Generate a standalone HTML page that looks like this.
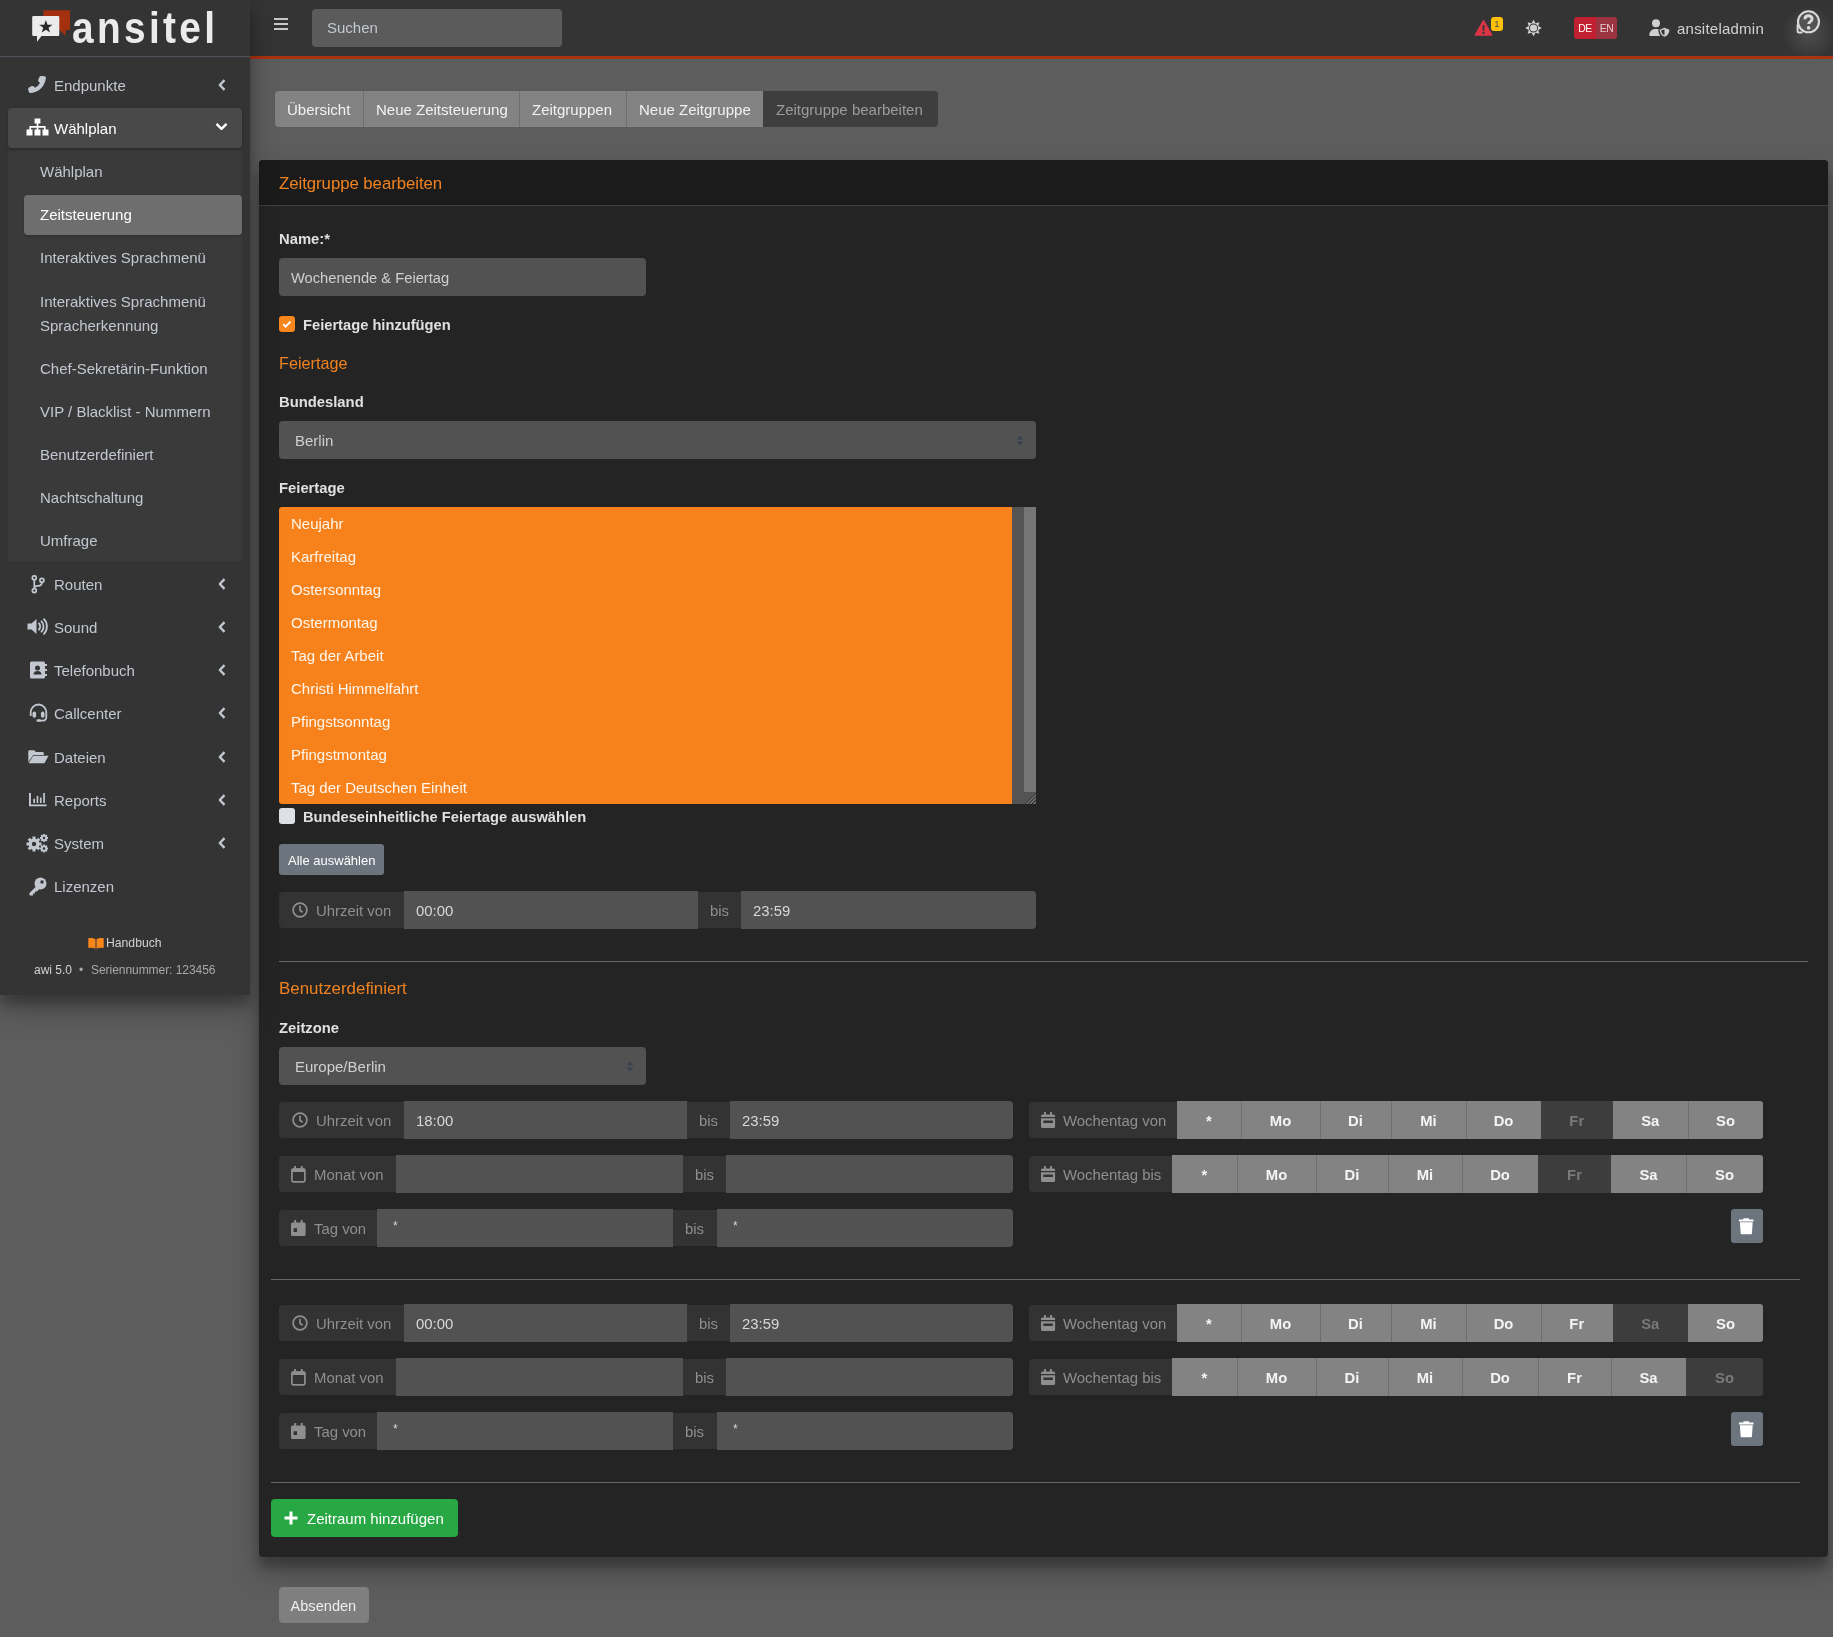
<!DOCTYPE html>
<html><head><meta charset="utf-8">
<style>
*{box-sizing:border-box;margin:0;padding:0}
html,body{width:1833px;height:1637px;overflow:hidden}
body{position:relative;background:#5d5d5d;font-family:"Liberation Sans",sans-serif;font-size:15px;color:#dcdcdc}
.a{position:absolute}
.t{position:absolute;white-space:nowrap;line-height:20px;height:20px}
svg{position:absolute;display:block}
/* navbar */
#nav{left:250px;top:0;width:1583px;height:59px;background:#343434;border-bottom:3px solid #aa330f}
#side{left:0;top:0;width:250px;height:995px;background:#343434;box-shadow:0 14px 28px rgba(0,0,0,.25),0 10px 10px rgba(0,0,0,.22);z-index:5}
.mi{color:#c2c7d0}
.chev{position:absolute;left:218px;width:8px;height:12px}
/* card */
#card{left:259px;top:160px;width:1569px;height:1397px;background:#242424;border-radius:4px;box-shadow:0 14px 28px rgba(0,0,0,.25),0 10px 10px rgba(0,0,0,.22)}
.lbl{font-weight:bold;color:#dedede;font-size:14.7px}
.inp{position:absolute;background:#525252;border-radius:4px}
.pre{position:absolute;background:#333333;border-radius:4px 0 0 4px}
.ptx{color:#8f8f8f;font-size:15px}
.val{color:#d9d9d9;font-size:15px}
</style></head><body><div id="root" style="position:absolute;left:0;top:0;width:1833px;height:1637px;will-change:transform;background:#5d5d5d">

<!-- content shadow below navbar -->


<div id="nav" class="a"></div>
<div class="a" style="left:274px;top:18px;width:14px;height:2px;background:#c8c8c8"></div>
<div class="a" style="left:274px;top:23px;width:14px;height:2px;background:#c8c8c8"></div>
<div class="a" style="left:274px;top:28px;width:14px;height:2px;background:#c8c8c8"></div>
<div class="a" style="left:312px;top:9px;width:250px;height:38px;background:#5b5b5b;border-radius:4px"></div>
<div class="t" style="left:327px;top:18px;color:#c3c7ce">Suchen</div>
<!-- warning -->
<svg style="left:1474px;top:19px" width="19" height="18" viewBox="0 0 19 18"><path d="M9.5 2.0L17.4 15.9H1.6z" fill="#dc3545" stroke="#dc3545" stroke-width="1.8" stroke-linejoin="round"/><path d="M8.4 6.2h2.2l-.35 5.6h-1.5z" fill="#343434"/><circle cx="9.5" cy="14" r="1.15" fill="#343434"/></svg>
<div class="a" style="left:1491px;top:17px;width:12px;height:14px;background:#ffc107;border-radius:3px;font-size:9.5px;line-height:14px;text-align:center;color:#4a4a4a">1</div>
<!-- sun -->
<svg style="left:1525px;top:19px" width="17" height="18" viewBox="0 0 17 18"><path d="M8.50 0.70L10.49 4.20L14.37 3.13L13.30 7.01L16.80 9.00L13.30 10.99L14.37 14.87L10.49 13.80L8.50 17.30L6.51 13.80L2.63 14.87L3.70 10.99L0.20 9.00L3.70 7.01L2.63 3.13L6.51 4.20z" fill="#cfcfcf"/><circle cx="8.5" cy="9" r="4.5" fill="#343434"/><circle cx="8.5" cy="9" r="3.6" fill="#cfcfcf"/></svg>
<!-- DE EN -->
<div class="a" style="left:1574px;top:17px;width:43px;height:22px;border-radius:3px;overflow:hidden;font-size:10.4px;line-height:23px;letter-spacing:-0.4px">
 <div class="a" style="left:0;top:0;width:22px;height:22px;background:#c0202f;color:#fff;text-align:center">DE</div>
 <div class="a" style="left:22px;top:0;width:21px;height:22px;background:#9b3441;color:#e6c9cc;text-align:center">EN</div>
</div>
<!-- user shield -->
<svg style="left:1649px;top:19px" width="21" height="18" viewBox="0 0 21 18"><circle cx="7" cy="4.2" r="4" fill="#cfcfcf"/><path d="M0.3 16.5c0-4 2.5-6.5 6.2-6.5h3c-.3 1.5-.2 4 1.7 7H1.3c-.6 0-1-.2-1-.5z" fill="#cfcfcf"/><path d="M15.5 8.7l4.9 2c0 3.3-1.7 5.9-4.9 7-3.2-1.1-4.9-3.7-4.9-7z" fill="#cfcfcf"/><path d="M15.5 10.2v6.1c-2-.9-3.3-2.7-3.4-4.9z" fill="#343434"/></svg>
<div class="t" style="left:1677px;top:18.5px;color:#d2d2d2;letter-spacing:0.23px">ansiteladmin</div>
<!-- help -->
<div class="a" style="left:1782px;top:6px;width:54px;height:54px;border-radius:50%;background:radial-gradient(circle,rgba(255,255,255,.12) 0%,rgba(255,255,255,.06) 40%,rgba(255,255,255,0) 70%)"></div>
<svg style="left:1795px;top:9px" width="27" height="27" viewBox="0 0 27 27"><path d="M2.6 15.3v6.9c0 .8.5 1.3 1.3 1.3h3.6" stroke="#dadada" stroke-width="1.9" fill="none"/><circle cx="13.5" cy="12.8" r="10.5" fill="#585858" fill-opacity=".8" stroke="#dadada" stroke-width="2.1"/><path d="M9.9 10.2c0-2.2 1.6-3.5 3.6-3.5s3.6 1.3 3.6 3.2c0 2.6-3.4 2.7-3.4 5" stroke="#dadada" stroke-width="2.9" fill="none"/><circle cx="13.6" cy="18.9" r="1.8" fill="#dadada"/></svg>
<!--SIDE-->
<div id="side" class="a">
 <!-- logo -->
 <svg style="left:32px;top:10px" width="40" height="33" viewBox="0 0 40 33">
  <path d="M11.5 0.3h26.5v19.7l-4.5 0.3v5.8l-5.5-5.8h-16.5z" fill="#a3300f"/>
  <path d="M1.5 5.9h24.5a1.3 1.3 0 0 1 1.3 1.3v17.6a1.3 1.3 0 0 1-1.3 1.3h-16.5l-4.5 5.7v-5.7h-3.5a1.3 1.3 0 0 1-1.3-1.3v-17.6a1.3 1.3 0 0 1 1.3-1.3z" fill="#ebebeb"/>
  <path d="M13.90 9.90L15.55 14.63L20.56 14.74L16.56 17.77L18.01 22.56L13.90 19.70L9.79 22.56L11.24 17.77L7.24 14.74L12.25 14.63z" fill="#2a2a2a"/>
 </svg>
 <div class="a" style="left:72px;top:4.9px;font-size:44.6px;line-height:46px;font-weight:bold;color:#ebebeb;letter-spacing:3.85px;transform:scaleX(0.87);transform-origin:0 0">ansitel</div>
 <div class="a" style="left:0;top:56px;width:250px;height:1px;background:#4b545c"></div>

 <!-- Endpunkte -->
 <svg style="left:28px;top:75px" width="19" height="19" viewBox="0 0 19 19"><path d="M16.6 1.2c1 .3 1.5 1.2 1.3 2.2C16.5 11.6 10.9 17 3 18.1c-1 .1-1.900-.4-2.2-1.4l-.6-2.3c-.2-.9.3-1.8 1.1-2.2l2.6-1.1c.8-.3 1.7-.1 2.2.6l.9 1.1c2.1-1.1 3.9-2.9 5-5l-1.1-.9c-.7-.5-.9-1.4-.6-2.2l1.1-2.6c.4-.8 1.3-1.3 2.2-1.100z" fill="#c2c7d0"/></svg>
 <div class="t mi" style="left:54px;top:76px">Endpunkte</div>
 <svg class="chev" style="top:79px" viewBox="0 0 8 12"><path d="M6.5 1.2L1.8 6l4.7 4.8" stroke="#c2c7d0" stroke-width="2.4" fill="none" stroke-linejoin="round"/></svg>

 <!-- Wählplan active -->
 <div class="a" style="left:8px;top:108px;width:234px;height:40px;background:#494949;border-radius:4px;box-shadow:0 1px 3px rgba(0,0,0,.2)"></div>
 <svg style="left:26px;top:118px" width="23" height="18" viewBox="0 0 23 18"><path d="M8.6 0.5h5.8v5h-5.8z M10.7 5.5h1.6v2.6h-1.6z M3.4 8.1h16.2v1.6H3.4z M3.4 8.1h1.6v3.4H3.4z M10.7 8.1h1.6v3.4h-1.6z M18 8.1h1.6v3.4H18z M0.5 11.5h6v6h-6z M8.5 11.5h6v6h-6z M16.5 11.5h6v6h-6z" fill="#fff"/></svg>
 <div class="t" style="left:54px;top:119px;color:#fff">Wählplan</div>
 <svg style="left:215px;top:122px" width="13" height="9" viewBox="0 0 13 9"><path d="M1.5 1.8L6.5 6.8l5-5" stroke="#fff" stroke-width="2.4" fill="none" stroke-linejoin="round"/></svg>

 <!-- submenu -->
 <div class="a" style="left:8px;top:151px;width:234px;height:410px;background:#3a3a3a"></div>
 <div class="a" style="left:24px;top:195px;width:218px;height:40px;background:#6e6e6e;border-radius:4px;box-shadow:0 1px 3px rgba(0,0,0,.2)"></div>
 <div class="t mi" style="left:40px;top:162px">Wählplan</div>
 <div class="t" style="left:40px;top:205px;color:#fff">Zeitsteuerung</div>
 <div class="t mi" style="left:40px;top:248px">Interaktives Sprachmenü</div>
 <div class="t mi" style="left:40px;top:292px">Interaktives Sprachmenü</div>
 <div class="t mi" style="left:40px;top:316px">Spracherkennung</div>
 <div class="t mi" style="left:40px;top:359px">Chef-Sekretärin-Funktion</div>
 <div class="t mi" style="left:40px;top:402px">VIP / Blacklist - Nummern</div>
 <div class="t mi" style="left:40px;top:445px">Benutzerdefiniert</div>
 <div class="t mi" style="left:40px;top:488px">Nachtschaltung</div>
 <div class="t mi" style="left:40px;top:531px">Umfrage</div>

 <!-- Routen -->
 <svg style="left:30.5px;top:574.5px" width="15" height="19" viewBox="0 0 15 19"><g fill="none" stroke="#c2c7d0" stroke-width="1.7"><circle cx="3.3" cy="2.8" r="2"/><circle cx="3.3" cy="15.6" r="2"/><circle cx="10.9" cy="5.3" r="2"/><path d="M3.3 4.8v8.8M10.9 7.3c0 2.6-1.6 3.6-3.6 3.6H6.5c-2 0-3.2.9-3.2 2.6"/></g></svg>
 <div class="t mi" style="left:54px;top:575px">Routen</div>
 <svg class="chev" style="top:578px" viewBox="0 0 8 12"><path d="M6.5 1.2L1.8 6l4.7 4.8" stroke="#c2c7d0" stroke-width="2.4" fill="none" stroke-linejoin="round"/></svg>

 <!-- Sound -->
 <svg style="left:27px;top:618px" width="21" height="17" viewBox="0 0 21 17"><path d="M0.5 5.5h4l5-4.5v15l-5-4.5h-4z" fill="#c2c7d0"/><path d="M12 5.5c1.5 1.5 1.5 4.5 0 6M14.5 3.3c2.7 2.7 2.7 7.7 0 10.4M17 1.2c3.8 3.8 3.8 10.8 0 14.6" stroke="#c2c7d0" stroke-width="1.8" fill="none" stroke-linecap="round"/></svg>
 <div class="t mi" style="left:54px;top:618px">Sound</div>
 <svg class="chev" style="top:621px" viewBox="0 0 8 12"><path d="M6.5 1.2L1.8 6l4.7 4.8" stroke="#c2c7d0" stroke-width="2.4" fill="none" stroke-linejoin="round"/></svg>

 <!-- Telefonbuch -->
 <svg style="left:29.8px;top:660.5px" width="17" height="18" viewBox="0 0 17 18"><path d="M1.5 0.5h12a1.5 1.5 0 0 1 1.5 1.5v14a1.5 1.5 0 0 1-1.5 1.5h-12a1.5 1.5 0 0 1-1.5-1.5v-14a1.5 1.5 0 0 1 1.5-1.5z" fill="#c2c7d0"/><circle cx="7.5" cy="7" r="2.5" fill="#343434"/><path d="M3.5 13.5c0-2.5 1.8-3.5 4-3.5s4 1 4 3.5z" fill="#343434"/><path d="M15 3h2v2h-2zM15 8h2v2h-2zM15 13h2v2h-2z" fill="#c2c7d0"/></svg>
 <div class="t mi" style="left:54px;top:661px">Telefonbuch</div>
 <svg class="chev" style="top:664px" viewBox="0 0 8 12"><path d="M6.5 1.2L1.8 6l4.7 4.8" stroke="#c2c7d0" stroke-width="2.4" fill="none" stroke-linejoin="round"/></svg>

 <!-- Callcenter -->
 <svg style="left:28.5px;top:703px" width="19" height="19" viewBox="0 0 19 19"><path d="M1.7 13V9.3a7.8 7.8 0 0 1 15.6 0V13" stroke="#c2c7d0" stroke-width="1.8" fill="none"/><rect x="3.5" y="8.6" width="3.6" height="6.2" rx="1.8" fill="#c2c7d0"/><rect x="11.9" y="8.6" width="3.6" height="6.2" rx="1.8" fill="#c2c7d0"/><path d="M17.3 12.5v1.8c0 2-1.4 3.3-3.4 3.3H10" stroke="#c2c7d0" stroke-width="1.7" fill="none"/><rect x="7.5" y="16.2" width="4.5" height="2.6" rx="1.3" fill="#c2c7d0"/></svg>
 <div class="t mi" style="left:54px;top:704px">Callcenter</div>
 <svg class="chev" style="top:707px" viewBox="0 0 8 12"><path d="M6.5 1.2L1.8 6l4.7 4.8" stroke="#c2c7d0" stroke-width="2.4" fill="none" stroke-linejoin="round"/></svg>

 <!-- Dateien -->
 <svg style="left:27.5px;top:749.5px" width="21" height="14" viewBox="0 0 21 14"><path d="M0.3 1.5A1.3 1.3 0 0 1 1.6 0.2h4.6l1.8 1.8h6.5a1.3 1.3 0 0 1 1.3 1.3v1.6H5.3L0.3 12.3z" fill="#c2c7d0"/><path d="M5.3 5.7h15.3l-4.2 7.6H0.6z" fill="#c2c7d0"/></svg>
 <div class="t mi" style="left:54px;top:748px">Dateien</div>
 <svg class="chev" style="top:751px" viewBox="0 0 8 12"><path d="M6.5 1.2L1.8 6l4.7 4.8" stroke="#c2c7d0" stroke-width="2.4" fill="none" stroke-linejoin="round"/></svg>

 <!-- Reports -->
 <svg style="left:28.8px;top:792.8px" width="18" height="14" viewBox="0 0 18 14"><path d="M0 0h1.9v11.4h15.7v1.9H0z M4.3 5.8h1.7v4.2H4.3z M7.6 3h1.7v7H7.6z M10.9 4.4h1.7v5.6h-1.7z M14.2 0h1.7v10h-1.7z" fill="#c2c7d0"/></svg>
 <div class="t mi" style="left:54px;top:791px">Reports</div>
 <svg class="chev" style="top:794px" viewBox="0 0 8 12"><path d="M6.5 1.2L1.8 6l4.7 4.8" stroke="#c2c7d0" stroke-width="2.4" fill="none" stroke-linejoin="round"/></svg>

 <!-- System -->
 <svg style="left:26px;top:833px" width="23" height="20" viewBox="0 0 23 20"><g fill="#c2c7d0"><circle cx="8" cy="11" r="5.5"/><g stroke="#c2c7d0" stroke-width="3"><path d="M8 3.5v15M0.5 11h15M2.7 5.7l10.6 10.6M13.3 5.7L2.7 16.3"/></g><circle cx="18" cy="5" r="3"/><circle cx="18" cy="15.5" r="3"/><g stroke="#c2c7d0" stroke-width="1.8"><path d="M18 1v8M14 5h8M15.2 2.2l5.6 5.6M20.8 2.2l-5.6 5.6M18 11.5v8M14 15.5h8M15.2 12.7l5.6 5.6M20.8 12.7l-5.6 5.6"/></g></g><circle cx="8" cy="11" r="2.2" fill="#343434"/><circle cx="18" cy="5" r="1.2" fill="#343434"/><circle cx="18" cy="15.5" r="1.2" fill="#343434"/></svg>
 <div class="t mi" style="left:54px;top:834px">System</div>
 <svg class="chev" style="top:837px" viewBox="0 0 8 12"><path d="M6.5 1.2L1.8 6l4.7 4.8" stroke="#c2c7d0" stroke-width="2.4" fill="none" stroke-linejoin="round"/></svg>

 <!-- Lizenzen -->
 <svg style="left:28px;top:877px" width="19" height="19" viewBox="0 0 19 19"><circle cx="12.5" cy="6.5" r="6" fill="#c2c7d0"/><circle cx="14" cy="5" r="1.7" fill="#343434"/><path d="M9 8.5L1.5 16v2.5h3.5v-2h2v-2h2l2-2z" fill="#c2c7d0"/></svg>
 <div class="t mi" style="left:54px;top:877px">Lizenzen</div>

 <!-- footer -->
 <svg style="left:88px;top:937px" width="16" height="12" viewBox="0 0 16 12"><path d="M0.3 1.2c2.5-.6 5.2-.4 7.2 1v9.5c-2-1.2-4.7-1.300-7.2-.6z M8.5 2.2c2-1.4 4.7-1.6 7.2-1v9.9c-2.5-.7-5.2-.6-7.2.6z" fill="#f7861d"/></svg>
 <div class="a" style="left:106px;top:935px;font-size:12.2px;line-height:16px;color:#d2d2d2">Handbuch</div>
 <div class="a" style="left:34px;top:962px;font-size:12px;line-height:16px;color:#d2d2d2">awi 5.0</div>
 <div class="a" style="left:79px;top:962px;font-size:12px;line-height:16px;color:#a8a8a8">•</div>
 <div class="a" style="left:91px;top:962px;font-size:12px;line-height:16px;color:#a8a8a8;letter-spacing:-0.05px">Seriennummer: 123456</div>
</div>
<!--/SIDE-->
<!--CARD-->
<div class="a" style="left:275px;top:91px;width:88px;height:36px;background:#838383;border-radius:4px 0 0 4px"></div>
<div class="a" style="left:363px;top:91px;width:156px;height:36px;background:#838383;"></div>
<div class="a" style="left:519px;top:91px;width:107px;height:36px;background:#838383;"></div>
<div class="a" style="left:626px;top:91px;width:137px;height:36px;background:#838383;"></div>
<div class="a" style="left:763px;top:91px;width:175px;height:36px;background:#3e3e3e;border-radius:0 4px 4px 0"></div>
<div class="a" style="left:363px;top:91px;width:1px;height:36px;background:#6e6e6e;"></div>
<div class="a" style="left:519px;top:91px;width:1px;height:36px;background:#6e6e6e;"></div>
<div class="a" style="left:626px;top:91px;width:1px;height:36px;background:#6e6e6e;"></div>
<div class="t" style="left:287px;top:100.0px;font-size:15px;color:#f2f2f2;">Übersicht</div>
<div class="t" style="left:376px;top:100.0px;font-size:15px;color:#f2f2f2;">Neue Zeitsteuerung</div>
<div class="t" style="left:532px;top:100.0px;font-size:15px;color:#f2f2f2;">Zeitgruppen</div>
<div class="t" style="left:639px;top:100.0px;font-size:15px;color:#f2f2f2;">Neue Zeitgruppe</div>
<div class="t" style="left:776px;top:100.0px;font-size:15px;color:#9c9c9c;">Zeitgruppe bearbeiten</div>
<div id="card" class="a"></div>
<div class="a" style="left:259px;top:160px;width:1569px;height:45px;background:#1b1b1b;border-radius:4px 4px 0 0"></div>
<div class="a" style="left:259px;top:205px;width:1569px;height:1px;background:#394048;"></div>
<div class="t" style="left:279px;top:174.2px;font-size:16.8px;color:#f0831f;letter-spacing:-0.05px;">Zeitgruppe bearbeiten</div>
<div class="t" style="left:279px;top:229.2px;font-size:14.8px;color:#e0e0e0;font-weight:bold;">Name:*</div>
<div class="a" style="left:279px;top:258px;width:367px;height:38px;background:#525252;border-radius:4px"></div>
<div class="t" style="left:291px;top:268.1px;font-size:14.7px;color:#cfcfcf;">Wochenende &amp; Feiertag</div>
<div class="a" style="left:279px;top:316px;width:16px;height:16px;background:#f7861d;border-radius:3px"></div>
<svg style="left:279px;top:316px" width="16" height="16" viewBox="0 0 16 16"><path d="M4.3 8.3l2.3 2.3 4.9-5" stroke="#fff" stroke-width="2" fill="none"/></svg>
<div class="t" style="left:303px;top:314.9px;font-size:14.7px;color:#e0e0e0;font-weight:bold;">Feiertage hinzufügen</div>
<div class="t" style="left:279px;top:352.8px;font-size:16.2px;color:#f0831f;">Feiertage</div>
<div class="t" style="left:279px;top:391.7px;font-size:14.8px;color:#e0e0e0;font-weight:bold;">Bundesland</div>
<div class="a" style="left:279px;top:421px;width:757px;height:38px;background:#525252;border-radius:4px"></div>
<div class="t" style="left:295px;top:431.2px;font-size:15px;color:#d0d0d0;">Berlin</div>
<svg style="left:1016px;top:435px" width="8" height="11" viewBox="0 0 8 11"><path d="M4 0.5L7.5 4.5H0.5z M4 10.5L7.5 6.5H0.5z" fill="#384350"/></svg>
<div class="t" style="left:279px;top:477.7px;font-size:14.8px;color:#e0e0e0;font-weight:bold;">Feiertage</div>
<div class="a" style="left:279px;top:507px;width:733px;height:297px;background:#f7811a;border-radius:3px 0 0 3px"></div>
<div class="a" style="left:1012px;top:507px;width:12px;height:297px;background:#545454;"></div>
<div class="a" style="left:1024px;top:507px;width:12px;height:285px;background:#757575;"></div>
<div class="a" style="left:1024px;top:792px;width:12px;height:12px;background:#545454;"></div>
<svg style="left:1024px;top:792px" width="12" height="12" viewBox="0 0 12 12"><path d="M12 1.3L1.3 12M12 4.8L4.8 12M12 8.3L8.3 12" stroke="#262626" stroke-width="0.9"/><path d="M12 2.5L2.5 12M12 6L6 12M12 9.5L9.5 12" stroke="#8c8c8c" stroke-width="0.9"/></svg>
<div class="t" style="left:291px;top:514.0px;font-size:15px;color:#fff7ee;">Neujahr</div>
<div class="t" style="left:291px;top:547.0px;font-size:15px;color:#fff7ee;">Karfreitag</div>
<div class="t" style="left:291px;top:580.0px;font-size:15px;color:#fff7ee;">Ostersonntag</div>
<div class="t" style="left:291px;top:613.0px;font-size:15px;color:#fff7ee;">Ostermontag</div>
<div class="t" style="left:291px;top:646.0px;font-size:15px;color:#fff7ee;">Tag der Arbeit</div>
<div class="t" style="left:291px;top:679.0px;font-size:15px;color:#fff7ee;">Christi Himmelfahrt</div>
<div class="t" style="left:291px;top:712.0px;font-size:15px;color:#fff7ee;">Pfingstsonntag</div>
<div class="t" style="left:291px;top:745.0px;font-size:15px;color:#fff7ee;">Pfingstmontag</div>
<div class="t" style="left:291px;top:778.0px;font-size:15px;color:#fff7ee;">Tag der Deutschen Einheit</div>
<div class="a" style="left:279px;top:808px;width:16px;height:16px;background:#dde1e6;border-radius:3px"></div>
<div class="t" style="left:303px;top:807.1px;font-size:14.7px;color:#e0e0e0;font-weight:bold;">Bundeseinheitliche Feiertage auswählen</div>
<div class="a" style="left:279px;top:844px;width:105px;height:31px;background:#6c757d;border-radius:3px"></div>
<div class="t" style="left:288px;top:850.5px;font-size:13px;color:#fff;">Alle auswählen</div>
<div class="a" style="left:279px;top:892px;width:125px;height:36px;background:#333333;border-radius:4px 0 0 4px"></div>
<div class="a" style="left:404px;top:891px;width:294px;height:38px;background:#525252;"></div>
<div class="a" style="left:698px;top:892px;width:43px;height:36px;background:#333333;"></div>
<div class="a" style="left:741px;top:891px;width:295px;height:38px;background:#525252;border-radius:0 4px 4px 0"></div>
<svg style="left:292px;top:902px" width="16" height="16" viewBox="0 0 16 16"><circle cx="8" cy="8" r="6.9" stroke="#8f8f8f" stroke-width="1.7" fill="none"/><path d="M8 3.8V8.3l2.6 1.9" stroke="#8f8f8f" stroke-width="1.7" fill="none"/></svg>
<div class="t" style="left:316px;top:900.6px;font-size:14.9px;color:#8f8f8f;">Uhrzeit von</div>
<div class="t" style="left:710px;top:900.6px;font-size:14.9px;color:#8f8f8f;">bis</div>
<div class="t" style="left:416px;top:900.6px;font-size:14.9px;color:#d8d8d8;">00:00</div>
<div class="t" style="left:753px;top:900.6px;font-size:14.9px;color:#d8d8d8;">23:59</div>
<div class="a" style="left:279px;top:961px;width:1529px;height:1px;background:#686868;"></div>
<div class="t" style="left:279px;top:978.9px;font-size:16.9px;color:#f0831f;">Benutzerdefiniert</div>
<div class="t" style="left:279px;top:1017.5px;font-size:14.8px;color:#e0e0e0;font-weight:bold;">Zeitzone</div>
<div class="a" style="left:279px;top:1047px;width:367px;height:38px;background:#525252;border-radius:4px"></div>
<div class="t" style="left:295px;top:1056.8px;font-size:15px;color:#d0d0d0;">Europe/Berlin</div>
<svg style="left:626px;top:1061px" width="8" height="11" viewBox="0 0 8 11"><path d="M4 0.5L7.5 4.5H0.5z M4 10.5L7.5 6.5H0.5z" fill="#384350"/></svg>
<div class="a" style="left:279px;top:1102px;width:125px;height:36px;background:#333333;border-radius:4px 0 0 4px"></div>
<div class="a" style="left:404px;top:1101px;width:283px;height:38px;background:#525252;"></div>
<div class="a" style="left:687px;top:1102px;width:43px;height:36px;background:#333333;"></div>
<div class="a" style="left:730px;top:1101px;width:283px;height:38px;background:#525252;border-radius:0 4px 4px 0"></div>
<svg style="left:292px;top:1112px" width="16" height="16" viewBox="0 0 16 16"><circle cx="8" cy="8" r="6.9" stroke="#8f8f8f" stroke-width="1.7" fill="none"/><path d="M8 3.8V8.3l2.6 1.9" stroke="#8f8f8f" stroke-width="1.7" fill="none"/></svg>
<div class="t" style="left:316px;top:1110.6px;font-size:14.9px;color:#8f8f8f;">Uhrzeit von</div>
<div class="t" style="left:699px;top:1110.6px;font-size:14.9px;color:#8f8f8f;">bis</div>
<div class="t" style="left:416px;top:1110.6px;font-size:14.9px;color:#d8d8d8;">18:00</div>
<div class="t" style="left:742px;top:1110.6px;font-size:14.9px;color:#d8d8d8;">23:59</div>
<div class="a" style="left:279px;top:1156px;width:117px;height:36px;background:#333333;border-radius:4px 0 0 4px"></div>
<div class="a" style="left:396px;top:1155px;width:287px;height:38px;background:#525252;"></div>
<div class="a" style="left:683px;top:1156px;width:43px;height:36px;background:#333333;"></div>
<div class="a" style="left:726px;top:1155px;width:287px;height:38px;background:#525252;border-radius:0 4px 4px 0"></div>
<svg style="left:291.1px;top:1165.9px" width="16" height="17" viewBox="0 0 16 17"><path d="M4 0v3M10.8 0v3" stroke="#8f8f8f" stroke-width="1.9"/><rect x="0.9" y="3" width="13" height="12.9" rx="1.3" stroke="#8f8f8f" stroke-width="1.7" fill="none"/><rect x="0.9" y="2.6" width="13" height="3.3" rx="1" fill="#8f8f8f"/></svg>
<div class="t" style="left:314px;top:1164.6px;font-size:14.9px;color:#8f8f8f;">Monat von</div>
<div class="t" style="left:695px;top:1164.6px;font-size:14.9px;color:#8f8f8f;">bis</div>
<div class="t" style="left:408px;top:1164.6px;font-size:14.9px;color:#d8d8d8;"></div>
<div class="t" style="left:738px;top:1164.6px;font-size:14.9px;color:#d8d8d8;"></div>
<div class="a" style="left:279px;top:1210px;width:98px;height:36px;background:#333333;border-radius:4px 0 0 4px"></div>
<div class="a" style="left:377px;top:1209px;width:296px;height:38px;background:#525252;"></div>
<div class="a" style="left:673px;top:1210px;width:44px;height:36px;background:#333333;"></div>
<div class="a" style="left:717px;top:1209px;width:296px;height:38px;background:#525252;border-radius:0 4px 4px 0"></div>
<svg style="left:291.1px;top:1220px" width="16" height="17" viewBox="0 0 16 17"><path d="M4.2 0v3M10.7 0v3" stroke="#8f8f8f" stroke-width="1.9"/><rect x="0" y="2.4" width="14.6" height="13.6" rx="1.6" fill="#8f8f8f"/><rect x="2.6" y="8.2" width="3.4" height="3.8" fill="#333"/></svg>
<div class="t" style="left:314px;top:1218.6px;font-size:14.9px;color:#8f8f8f;">Tag von</div>
<div class="t" style="left:685px;top:1218.6px;font-size:14.9px;color:#8f8f8f;">bis</div>
<div class="t" style="left:393px;top:1216.1px;font-size:12px;color:#d8d8d8;">*</div>
<div class="t" style="left:733px;top:1216.1px;font-size:12px;color:#d8d8d8;">*</div>
<div class="a" style="left:1029px;top:1102px;width:148px;height:36px;background:#333333;border-radius:4px 0 0 4px"></div>
<svg style="left:1040.9px;top:1111.8px" width="16" height="17" viewBox="0 0 16 17"><path d="M4 0v3M10 0v3" stroke="#8f8f8f" stroke-width="1.9"/><path d="M1.5 2.4h11.1a1.5 1.5 0 0 1 1.5 1.5v1.2H0v-1.2a1.5 1.5 0 0 1 1.5-1.5z" fill="#8f8f8f"/><path d="M0 6.2h14.1v8.4a1.5 1.5 0 0 1-1.5 1.5H1.5a1.5 1.5 0 0 1-1.5-1.5z M2.3 8.4v2.6h9.6V8.4z" fill="#8f8f8f" fill-rule="evenodd"/></svg>
<div class="t" style="left:1063px;top:1110.6px;font-size:14.9px;color:#8f8f8f;">Wochentag von</div>
<div class="a" style="left:1177px;top:1101px;width:64px;height:38px;background:#838383;"></div>
<div class="t" style="left:1177px;width:64px;text-align:center;top:1110.8px;font-size:14.8px;font-weight:bold;color:#f4f4f4">*</div>
<div class="a" style="left:1241px;top:1101px;width:79px;height:38px;background:#838383;"></div>
<div class="t" style="left:1241px;width:79px;text-align:center;top:1110.8px;font-size:14.8px;font-weight:bold;color:#f4f4f4">Mo</div>
<div class="a" style="left:1320px;top:1101px;width:71px;height:38px;background:#838383;"></div>
<div class="t" style="left:1320px;width:71px;text-align:center;top:1110.8px;font-size:14.8px;font-weight:bold;color:#f4f4f4">Di</div>
<div class="a" style="left:1391px;top:1101px;width:75px;height:38px;background:#838383;"></div>
<div class="t" style="left:1391px;width:75px;text-align:center;top:1110.8px;font-size:14.8px;font-weight:bold;color:#f4f4f4">Mi</div>
<div class="a" style="left:1466px;top:1101px;width:75px;height:38px;background:#838383;"></div>
<div class="t" style="left:1466px;width:75px;text-align:center;top:1110.8px;font-size:14.8px;font-weight:bold;color:#f4f4f4">Do</div>
<div class="a" style="left:1541px;top:1101px;width:71.5px;height:38px;background:#3d3d3d;"></div>
<div class="t" style="left:1541px;width:71.5px;text-align:center;top:1110.8px;font-size:14.8px;font-weight:bold;color:#7a7a7a">Fr</div>
<div class="a" style="left:1612.5px;top:1101px;width:75.5px;height:38px;background:#838383;"></div>
<div class="t" style="left:1612.5px;width:75.5px;text-align:center;top:1110.8px;font-size:14.8px;font-weight:bold;color:#f4f4f4">Sa</div>
<div class="a" style="left:1688px;top:1101px;width:75px;height:38px;background:#838383;border-radius:0 3px 3px 0;"></div>
<div class="t" style="left:1688px;width:75px;text-align:center;top:1110.8px;font-size:14.8px;font-weight:bold;color:#f4f4f4">So</div>
<div class="a" style="left:1241px;top:1101px;width:1px;height:38px;background:#6e6e6e;"></div>
<div class="a" style="left:1320px;top:1101px;width:1px;height:38px;background:#6e6e6e;"></div>
<div class="a" style="left:1391px;top:1101px;width:1px;height:38px;background:#6e6e6e;"></div>
<div class="a" style="left:1466px;top:1101px;width:1px;height:38px;background:#6e6e6e;"></div>
<div class="a" style="left:1688px;top:1101px;width:1px;height:38px;background:#6e6e6e;"></div>
<div class="a" style="left:1029px;top:1156px;width:143px;height:36px;background:#333333;border-radius:4px 0 0 4px"></div>
<svg style="left:1040.9px;top:1165.8px" width="16" height="17" viewBox="0 0 16 17"><path d="M4 0v3M10 0v3" stroke="#8f8f8f" stroke-width="1.9"/><path d="M1.5 2.4h11.1a1.5 1.5 0 0 1 1.5 1.5v1.2H0v-1.2a1.5 1.5 0 0 1 1.5-1.5z" fill="#8f8f8f"/><path d="M0 6.2h14.1v8.4a1.5 1.5 0 0 1-1.5 1.5H1.5a1.5 1.5 0 0 1-1.5-1.5z M2.3 8.4v2.6h9.6V8.4z" fill="#8f8f8f" fill-rule="evenodd"/></svg>
<div class="t" style="left:1063px;top:1164.6px;font-size:14.9px;color:#8f8f8f;">Wochentag bis</div>
<div class="a" style="left:1172px;top:1155px;width:65px;height:38px;background:#838383;"></div>
<div class="t" style="left:1172px;width:65px;text-align:center;top:1164.8px;font-size:14.8px;font-weight:bold;color:#f4f4f4">*</div>
<div class="a" style="left:1237px;top:1155px;width:79px;height:38px;background:#838383;"></div>
<div class="t" style="left:1237px;width:79px;text-align:center;top:1164.8px;font-size:14.8px;font-weight:bold;color:#f4f4f4">Mo</div>
<div class="a" style="left:1316px;top:1155px;width:72px;height:38px;background:#838383;"></div>
<div class="t" style="left:1316px;width:72px;text-align:center;top:1164.8px;font-size:14.8px;font-weight:bold;color:#f4f4f4">Di</div>
<div class="a" style="left:1388px;top:1155px;width:74px;height:38px;background:#838383;"></div>
<div class="t" style="left:1388px;width:74px;text-align:center;top:1164.8px;font-size:14.8px;font-weight:bold;color:#f4f4f4">Mi</div>
<div class="a" style="left:1462px;top:1155px;width:76px;height:38px;background:#838383;"></div>
<div class="t" style="left:1462px;width:76px;text-align:center;top:1164.8px;font-size:14.8px;font-weight:bold;color:#f4f4f4">Do</div>
<div class="a" style="left:1538px;top:1155px;width:73px;height:38px;background:#3d3d3d;"></div>
<div class="t" style="left:1538px;width:73px;text-align:center;top:1164.8px;font-size:14.8px;font-weight:bold;color:#7a7a7a">Fr</div>
<div class="a" style="left:1611px;top:1155px;width:75px;height:38px;background:#838383;"></div>
<div class="t" style="left:1611px;width:75px;text-align:center;top:1164.8px;font-size:14.8px;font-weight:bold;color:#f4f4f4">Sa</div>
<div class="a" style="left:1686px;top:1155px;width:77px;height:38px;background:#838383;border-radius:0 3px 3px 0;"></div>
<div class="t" style="left:1686px;width:77px;text-align:center;top:1164.8px;font-size:14.8px;font-weight:bold;color:#f4f4f4">So</div>
<div class="a" style="left:1237px;top:1155px;width:1px;height:38px;background:#6e6e6e;"></div>
<div class="a" style="left:1316px;top:1155px;width:1px;height:38px;background:#6e6e6e;"></div>
<div class="a" style="left:1388px;top:1155px;width:1px;height:38px;background:#6e6e6e;"></div>
<div class="a" style="left:1462px;top:1155px;width:1px;height:38px;background:#6e6e6e;"></div>
<div class="a" style="left:1686px;top:1155px;width:1px;height:38px;background:#6e6e6e;"></div>
<div class="a" style="left:1731px;top:1209px;width:32px;height:34px;background:#6c757d;border-radius:3px"></div>
<svg style="left:1739.2px;top:1217.6px" width="15" height="17" viewBox="0 0 15 17"><path d="M4.6 0.3h5.2l.5 1.1h4.2v2H0v-2h4.2z M0.9 4.3h12.8l-.75 10.9c-.05.6-.5 1-1.1 1H2.75c-.6 0-1.05-.4-1.1-1z" fill="#fff"/></svg>
<div class="a" style="left:271px;top:1279px;width:1529px;height:1px;background:#686868;"></div>
<div class="a" style="left:279px;top:1305px;width:125px;height:36px;background:#333333;border-radius:4px 0 0 4px"></div>
<div class="a" style="left:404px;top:1304px;width:283px;height:38px;background:#525252;"></div>
<div class="a" style="left:687px;top:1305px;width:43px;height:36px;background:#333333;"></div>
<div class="a" style="left:730px;top:1304px;width:283px;height:38px;background:#525252;border-radius:0 4px 4px 0"></div>
<svg style="left:292px;top:1315px" width="16" height="16" viewBox="0 0 16 16"><circle cx="8" cy="8" r="6.9" stroke="#8f8f8f" stroke-width="1.7" fill="none"/><path d="M8 3.8V8.3l2.6 1.9" stroke="#8f8f8f" stroke-width="1.7" fill="none"/></svg>
<div class="t" style="left:316px;top:1313.6px;font-size:14.9px;color:#8f8f8f;">Uhrzeit von</div>
<div class="t" style="left:699px;top:1313.6px;font-size:14.9px;color:#8f8f8f;">bis</div>
<div class="t" style="left:416px;top:1313.6px;font-size:14.9px;color:#d8d8d8;">00:00</div>
<div class="t" style="left:742px;top:1313.6px;font-size:14.9px;color:#d8d8d8;">23:59</div>
<div class="a" style="left:279px;top:1359px;width:117px;height:36px;background:#333333;border-radius:4px 0 0 4px"></div>
<div class="a" style="left:396px;top:1358px;width:287px;height:38px;background:#525252;"></div>
<div class="a" style="left:683px;top:1359px;width:43px;height:36px;background:#333333;"></div>
<div class="a" style="left:726px;top:1358px;width:287px;height:38px;background:#525252;border-radius:0 4px 4px 0"></div>
<svg style="left:291.1px;top:1368.9px" width="16" height="17" viewBox="0 0 16 17"><path d="M4 0v3M10.8 0v3" stroke="#8f8f8f" stroke-width="1.9"/><rect x="0.9" y="3" width="13" height="12.9" rx="1.3" stroke="#8f8f8f" stroke-width="1.7" fill="none"/><rect x="0.9" y="2.6" width="13" height="3.3" rx="1" fill="#8f8f8f"/></svg>
<div class="t" style="left:314px;top:1367.6px;font-size:14.9px;color:#8f8f8f;">Monat von</div>
<div class="t" style="left:695px;top:1367.6px;font-size:14.9px;color:#8f8f8f;">bis</div>
<div class="t" style="left:408px;top:1367.6px;font-size:14.9px;color:#d8d8d8;"></div>
<div class="t" style="left:738px;top:1367.6px;font-size:14.9px;color:#d8d8d8;"></div>
<div class="a" style="left:279px;top:1413px;width:98px;height:36px;background:#333333;border-radius:4px 0 0 4px"></div>
<div class="a" style="left:377px;top:1412px;width:296px;height:38px;background:#525252;"></div>
<div class="a" style="left:673px;top:1413px;width:44px;height:36px;background:#333333;"></div>
<div class="a" style="left:717px;top:1412px;width:296px;height:38px;background:#525252;border-radius:0 4px 4px 0"></div>
<svg style="left:291.1px;top:1423px" width="16" height="17" viewBox="0 0 16 17"><path d="M4.2 0v3M10.7 0v3" stroke="#8f8f8f" stroke-width="1.9"/><rect x="0" y="2.4" width="14.6" height="13.6" rx="1.6" fill="#8f8f8f"/><rect x="2.6" y="8.2" width="3.4" height="3.8" fill="#333"/></svg>
<div class="t" style="left:314px;top:1421.6px;font-size:14.9px;color:#8f8f8f;">Tag von</div>
<div class="t" style="left:685px;top:1421.6px;font-size:14.9px;color:#8f8f8f;">bis</div>
<div class="t" style="left:393px;top:1419.1px;font-size:12px;color:#d8d8d8;">*</div>
<div class="t" style="left:733px;top:1419.1px;font-size:12px;color:#d8d8d8;">*</div>
<div class="a" style="left:1029px;top:1305px;width:148px;height:36px;background:#333333;border-radius:4px 0 0 4px"></div>
<svg style="left:1040.9px;top:1314.8px" width="16" height="17" viewBox="0 0 16 17"><path d="M4 0v3M10 0v3" stroke="#8f8f8f" stroke-width="1.9"/><path d="M1.5 2.4h11.1a1.5 1.5 0 0 1 1.5 1.5v1.2H0v-1.2a1.5 1.5 0 0 1 1.5-1.5z" fill="#8f8f8f"/><path d="M0 6.2h14.1v8.4a1.5 1.5 0 0 1-1.5 1.5H1.5a1.5 1.5 0 0 1-1.5-1.5z M2.3 8.4v2.6h9.6V8.4z" fill="#8f8f8f" fill-rule="evenodd"/></svg>
<div class="t" style="left:1063px;top:1313.6px;font-size:14.9px;color:#8f8f8f;">Wochentag von</div>
<div class="a" style="left:1177px;top:1304px;width:64px;height:38px;background:#838383;"></div>
<div class="t" style="left:1177px;width:64px;text-align:center;top:1313.8px;font-size:14.8px;font-weight:bold;color:#f4f4f4">*</div>
<div class="a" style="left:1241px;top:1304px;width:79px;height:38px;background:#838383;"></div>
<div class="t" style="left:1241px;width:79px;text-align:center;top:1313.8px;font-size:14.8px;font-weight:bold;color:#f4f4f4">Mo</div>
<div class="a" style="left:1320px;top:1304px;width:71px;height:38px;background:#838383;"></div>
<div class="t" style="left:1320px;width:71px;text-align:center;top:1313.8px;font-size:14.8px;font-weight:bold;color:#f4f4f4">Di</div>
<div class="a" style="left:1391px;top:1304px;width:75px;height:38px;background:#838383;"></div>
<div class="t" style="left:1391px;width:75px;text-align:center;top:1313.8px;font-size:14.8px;font-weight:bold;color:#f4f4f4">Mi</div>
<div class="a" style="left:1466px;top:1304px;width:75px;height:38px;background:#838383;"></div>
<div class="t" style="left:1466px;width:75px;text-align:center;top:1313.8px;font-size:14.8px;font-weight:bold;color:#f4f4f4">Do</div>
<div class="a" style="left:1541px;top:1304px;width:71.5px;height:38px;background:#838383;"></div>
<div class="t" style="left:1541px;width:71.5px;text-align:center;top:1313.8px;font-size:14.8px;font-weight:bold;color:#f4f4f4">Fr</div>
<div class="a" style="left:1612.5px;top:1304px;width:75.5px;height:38px;background:#3d3d3d;"></div>
<div class="t" style="left:1612.5px;width:75.5px;text-align:center;top:1313.8px;font-size:14.8px;font-weight:bold;color:#7a7a7a">Sa</div>
<div class="a" style="left:1688px;top:1304px;width:75px;height:38px;background:#838383;border-radius:0 3px 3px 0;"></div>
<div class="t" style="left:1688px;width:75px;text-align:center;top:1313.8px;font-size:14.8px;font-weight:bold;color:#f4f4f4">So</div>
<div class="a" style="left:1241px;top:1304px;width:1px;height:38px;background:#6e6e6e;"></div>
<div class="a" style="left:1320px;top:1304px;width:1px;height:38px;background:#6e6e6e;"></div>
<div class="a" style="left:1391px;top:1304px;width:1px;height:38px;background:#6e6e6e;"></div>
<div class="a" style="left:1466px;top:1304px;width:1px;height:38px;background:#6e6e6e;"></div>
<div class="a" style="left:1541px;top:1304px;width:1px;height:38px;background:#6e6e6e;"></div>
<div class="a" style="left:1029px;top:1359px;width:143px;height:36px;background:#333333;border-radius:4px 0 0 4px"></div>
<svg style="left:1040.9px;top:1368.8px" width="16" height="17" viewBox="0 0 16 17"><path d="M4 0v3M10 0v3" stroke="#8f8f8f" stroke-width="1.9"/><path d="M1.5 2.4h11.1a1.5 1.5 0 0 1 1.5 1.5v1.2H0v-1.2a1.5 1.5 0 0 1 1.5-1.5z" fill="#8f8f8f"/><path d="M0 6.2h14.1v8.4a1.5 1.5 0 0 1-1.5 1.5H1.5a1.5 1.5 0 0 1-1.5-1.5z M2.3 8.4v2.6h9.6V8.4z" fill="#8f8f8f" fill-rule="evenodd"/></svg>
<div class="t" style="left:1063px;top:1367.6px;font-size:14.9px;color:#8f8f8f;">Wochentag bis</div>
<div class="a" style="left:1172px;top:1358px;width:65px;height:38px;background:#838383;"></div>
<div class="t" style="left:1172px;width:65px;text-align:center;top:1367.8px;font-size:14.8px;font-weight:bold;color:#f4f4f4">*</div>
<div class="a" style="left:1237px;top:1358px;width:79px;height:38px;background:#838383;"></div>
<div class="t" style="left:1237px;width:79px;text-align:center;top:1367.8px;font-size:14.8px;font-weight:bold;color:#f4f4f4">Mo</div>
<div class="a" style="left:1316px;top:1358px;width:72px;height:38px;background:#838383;"></div>
<div class="t" style="left:1316px;width:72px;text-align:center;top:1367.8px;font-size:14.8px;font-weight:bold;color:#f4f4f4">Di</div>
<div class="a" style="left:1388px;top:1358px;width:74px;height:38px;background:#838383;"></div>
<div class="t" style="left:1388px;width:74px;text-align:center;top:1367.8px;font-size:14.8px;font-weight:bold;color:#f4f4f4">Mi</div>
<div class="a" style="left:1462px;top:1358px;width:76px;height:38px;background:#838383;"></div>
<div class="t" style="left:1462px;width:76px;text-align:center;top:1367.8px;font-size:14.8px;font-weight:bold;color:#f4f4f4">Do</div>
<div class="a" style="left:1538px;top:1358px;width:73px;height:38px;background:#838383;"></div>
<div class="t" style="left:1538px;width:73px;text-align:center;top:1367.8px;font-size:14.8px;font-weight:bold;color:#f4f4f4">Fr</div>
<div class="a" style="left:1611px;top:1358px;width:75px;height:38px;background:#838383;"></div>
<div class="t" style="left:1611px;width:75px;text-align:center;top:1367.8px;font-size:14.8px;font-weight:bold;color:#f4f4f4">Sa</div>
<div class="a" style="left:1686px;top:1358px;width:77px;height:38px;background:#3d3d3d;border-radius:0 3px 3px 0;"></div>
<div class="t" style="left:1686px;width:77px;text-align:center;top:1367.8px;font-size:14.8px;font-weight:bold;color:#7a7a7a">So</div>
<div class="a" style="left:1237px;top:1358px;width:1px;height:38px;background:#6e6e6e;"></div>
<div class="a" style="left:1316px;top:1358px;width:1px;height:38px;background:#6e6e6e;"></div>
<div class="a" style="left:1388px;top:1358px;width:1px;height:38px;background:#6e6e6e;"></div>
<div class="a" style="left:1462px;top:1358px;width:1px;height:38px;background:#6e6e6e;"></div>
<div class="a" style="left:1538px;top:1358px;width:1px;height:38px;background:#6e6e6e;"></div>
<div class="a" style="left:1611px;top:1358px;width:1px;height:38px;background:#6e6e6e;"></div>
<div class="a" style="left:1731px;top:1412px;width:32px;height:34px;background:#6c757d;border-radius:3px"></div>
<svg style="left:1739.2px;top:1420.6px" width="15" height="17" viewBox="0 0 15 17"><path d="M4.6 0.3h5.2l.5 1.1h4.2v2H0v-2h4.2z M0.9 4.3h12.8l-.75 10.9c-.05.6-.5 1-1.1 1H2.75c-.6 0-1.05-.4-1.1-1z" fill="#fff"/></svg>
<div class="a" style="left:271px;top:1482px;width:1529px;height:1px;background:#686868;"></div>
<div class="a" style="left:271px;top:1499px;width:187px;height:38px;background:#28a745;border-radius:4px"></div>
<svg style="left:284px;top:1511px" width="14" height="14" viewBox="0 0 14 14"><path d="M7 0.5v13M0.5 7h13" stroke="#fff" stroke-width="3"/></svg>
<div class="t" style="left:307px;top:1508.8px;font-size:15px;color:#fff;">Zeitraum hinzufügen</div>
<div class="a" style="left:279px;top:1587px;width:90px;height:36px;background:#7f7f7f;border-radius:4px"></div>
<div class="t" style="left:290.5px;top:1595.9px;font-size:14.6px;color:#efefef;">Absenden</div>
<!--/CARD-->
</div></body></html>
